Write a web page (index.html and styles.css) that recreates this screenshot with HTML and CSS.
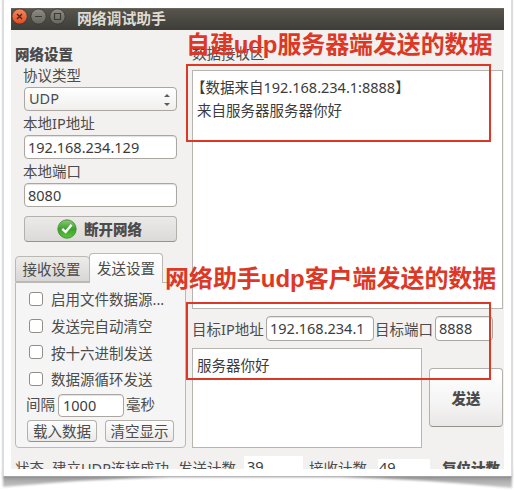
FILE: index.html
```html
<!DOCTYPE html>
<html lang="zh-CN">
<head>
<meta charset="utf-8">
<title>网络调试助手</title>
<link rel="stylesheet" href="styles.css">
</head>
<body>
<svg class="curl" width="515" height="490" viewBox="0 0 515 490">
  <defs>
    <filter id="soft" x="-5%" y="-50%" width="110%" height="200%"><feGaussianBlur stdDeviation="1"/></filter>
    <linearGradient id="fade" gradientUnits="userSpaceOnUse" x1="0" x2="0" y1="475" y2="488">
      <stop offset="0" stop-color="#7c7c7c"/><stop offset=".35" stop-color="#a8a8a8"/><stop offset="1" stop-color="#cacaca"/>
    </linearGradient>
  </defs>
  <path d="M3 470H512V488Q420 479 340 477H170Q90 479 3 487Z" fill="url(#fade)" filter="url(#soft)"/>
</svg>
<div class="sheet">
  <div class="window">
    <header class="titlebar">
      <svg width="56" height="18" viewBox="0 0 56 18" fill="none">
        <defs>
          <linearGradient id="close" x1="0" y1="0" x2="0" y2="1"><stop stop-color="#f58862"/><stop offset="1" stop-color="#df4b1e"/></linearGradient>
          <linearGradient id="ctl" x1="0" y1="0" x2="0" y2="1"><stop stop-color="#8d8b84"/><stop offset="1" stop-color="#67655f"/></linearGradient>
        </defs>
        <g transform="translate(0 -2)">
        <circle cx="8.6" cy="8.5" r="7.6" fill="url(#close)" stroke="#35332e" stroke-width=".7"/>
        <circle cx="27.5" cy="8.5" r="7.6" fill="url(#ctl)" stroke="#35332e" stroke-width=".7"/>
        <circle cx="46.5" cy="8.5" r="7.6" fill="url(#ctl)" stroke="#35332e" stroke-width=".7"/>
        <path d="M6 6l5 5M11 6l-5 5" stroke="#4a2518" stroke-width="1.3"/>
        <path d="M24 8.5h7M43.5 5.5h6v6h-6z" stroke="#3b3a36" stroke-width="1.2"/>
        </g>
      </svg>
      <h1 class="title">网络调试助手</h1>
    </header>
    <div class="main">
      <aside class="side">
        <h2 class="heading">网络设置</h2>
        <div class="settings">
          <div class="label">协议类型</div>
          <div class="field combo"><span>UDP</span><svg width="8" height="14" viewBox="0 0 8 14" fill="#5c5c5c"><path d="M1 6L4 3l3 3zM1 12h6l-3 3z"/></svg></div>
          <div class="label">本地IP地址</div>
          <div class="field">192.168.234.129</div>
          <div class="label">本地端口</div>
          <div class="field">8080</div>
          <div class="button connect">
            <svg width="20" height="20" viewBox="0 0 20 20" fill="none">
              <defs><linearGradient id="ok" x1="0" y1="0" x2="0" y2="1"><stop stop-color="#8dcb79"/><stop offset=".5" stop-color="#3f9f2d"/><stop offset="1" stop-color="#59c83c"/></linearGradient></defs>
              <circle cx="10" cy="10" r="9.2" fill="url(#ok)" stroke="#39852e" stroke-width=".8"/>
              <path d="M5.3 9.8l3.3 3.2 6-7.2" stroke="#fff" stroke-width="2.4"/>
            </svg>
            <span>断开网络</span>
          </div>
        </div>
        <div class="tabs"><div class="tab">接收设置</div><div class="tab active">发送设置</div></div>
        <div class="panel">
          <div class="check"><i class="box"></i>启用文件数据源...</div>
          <div class="check"><i class="box"></i>发送完自动清空</div>
          <div class="check"><i class="box"></i>按十六进制发送</div>
          <div class="check"><i class="box"></i>数据源循环发送</div>
          <div class="interval"><span>间隔</span><div class="field">1000</div><span>毫秒</span></div>
          <div class="actions"><div class="button load">载入数据</div><div class="button clear">清空显示</div></div>
        </div>
      </aside>
      <section class="content">
        <div class="receive-label">数据接收区</div>
        <div class="text received"><p class="source">【数据来自192.168.234.1:8888】</p><p>来自服务器服务器你好</p></div>
        <div class="target"><span class="ip-label">目标IP地址</span><div class="field ip">192.168.234.1</div><span class="port-label">目标端口</span><div class="field port">8888</div></div>
        <div class="compose"><div class="text message">服务器你好</div><div class="button send">发送</div></div>
      </section>
    </div>
    <footer class="status">
      <span class="state">状态</span><span class="connection">建立UDP连接成功</span><span class="sent">发送计数</span><span class="count">39</span><span class="got">接收计数</span><span class="count second">49</span><b>复位计数</b>
    </footer>
  </div>
</div>
<div class="frame frame-top"></div>
<div class="frame frame-bottom"></div>
<div class="note note-top">自建udp服务器端发送的数据</div>
<div class="note note-bottom">网络助手udp客户端发送的数据</div>
</body>
</html>
```

FILE: styles.css
```css
* { box-sizing: border-box; }
body {
  margin: 0; width: 515px; height: 490px; overflow: hidden; position: relative; background: #fff;
  font: 14.5px/20px "Noto Sans", "Noto Sans CJK SC", sans-serif; color: #4c4c4c; white-space: nowrap;
}
h1, h2, p { margin: 0; }
svg { display: block; flex: none; overflow: visible; }
.curl { position: absolute; left: 0; top: 0; }
.sheet { position: relative; width: 507px; height: 476px; margin-left: 4px; padding: 8px 7px 7px; background: #fff; box-shadow: -2px 0 1px #ddd, 2px 0 1px #ddd; }
.window { width: 493px; height: 461px; overflow: hidden; background: #f2f1f0; }
.titlebar { height: 22px; display: flex; align-items: flex-start; padding-top: 1px; background: linear-gradient(#57544c, #3e3d38); border-top: 1px solid #69665e; }
.title { margin-left: 10px; font-size: 14.8px; line-height: 16px; font-weight: 700; color: #dfdbd2; }
.main { display: flex; height: 418px; padding-left: 4px; }
.side { width: 171px; flex: none; padding-top: 14px; }
.heading { font-size: 14.5px; line-height: 20px; font-weight: 900; }
.settings { padding: 1px 9px 0; height: 189px; }
.label { height: 20px; margin: 0 0 2px -1px; }
.field { height: 24px; border: 1px solid #aaa6a1; border-radius: 4px; background: #fff; padding: 0 3px; line-height: 22px; color: #3c3c3c; box-shadow: inset 0 1px 1px #e4e2e0; }
.settings .field { margin-bottom: 2px; }
.combo { display: flex; justify-content: space-between; align-items: center; padding: 0 5px 2px 4px; color: #4c4c4c; background: linear-gradient(#fff, #f0efee); box-shadow: none; }
.button { display: flex; align-items: center; justify-content: center; border: 1px solid #b4b0ac; border-bottom-color: #96928e; border-radius: 4px; background: linear-gradient(#fdfdfd, #ebeae9); }
.button.connect { height: 26px; margin-top: 9px; padding-right: 2px; gap: 7px; font-weight: 900; background: linear-gradient(#ebeae9, #dcdad8); }
.tabs { display: flex; height: 29px; align-items: flex-end; }
.tab { width: 75px; height: 26px; padding-right: 2px; border: 1px solid #bcb8b4; border-radius: 4px 4px 0 0; background: linear-gradient(#ececeb, #d9d7d5); text-align: center; line-height: 24px; }
.tab.active { height: 30px; width: 74px; padding: 0; margin: 0 0 -1px -1px; background: linear-gradient(#fff, #f5f5f5); border-bottom: 0; line-height: 29px; position: relative; }
.panel { height: 166px; padding: 3px 10px 0; border: 1px solid #bcb8b4; border-radius: 0 0 4px 4px; background: #f5f5f5; }
.check { height: 26.7px; display: flex; align-items: center; padding-left: 3px; }
.box { width: 14px; height: 14px; margin: -1px 8px 0 0; border: 1px solid #918d89; border-radius: 3px; background: #fff; }
.interval { display: flex; height: 22px; gap: 2px; line-height: 21px; margin-top: 1px; }
.interval .field { width: 66px; height: 23px; margin-left: 1px; padding-left: 4px; line-height: 21px; }
.actions { display: flex; padding-left: 1px; gap: 8px; margin-top: 4px; }
.load, .clear { width: 70px; height: 22px; }
.clear { width: 69px; }
.content { width: 311px; margin-left: 6px; padding-top: 13px; }
.receive-label { height: 27px; }
.text { border: 1px solid #b8b4b0; background: #fff; color: #3c3c3c; }
.received { height: 239px; padding: 5px 4px; line-height: 23px; }
.source { text-indent: -6px; }
.target { display: flex; align-items: center; height: 25px; margin-top: 7px; }
.ip-label { width: 74px; }
.ip { width: 108px; height: 25px; margin-right: 1px; line-height: 22px; }
.port-label { width: 60px; }
.port { width: 58px; height: 25px; line-height: 22px; }
.compose { display: flex; margin-top: 7px; }
.message { width: 230px; height: 100px; padding: 6px 4px; }
.send { width: 74px; height: 59px; margin: 20px 0 0 7px; font-weight: 900; background: linear-gradient(#fff, #f5f4f4 60%, #e9e8e7); }
.status { display: flex; height: 21px; padding-left: 4px; }
.status span, .status b { line-height: 20px; margin-top: 10px; flex: none; }
.status .state { width: 37px; }
.status .connection { width: 126px; }
.status .sent { width: 66px; }
.status .count { width: 59px; margin-top: 8px; padding: 0 3px; background: #fff; color: #3c3c3c; }
.status .got { width: 69px; margin-left: 6px; }
.status .second { width: 52px; padding: 0 0 0 1px; margin-top: 11px; line-height: 17px; height: 20px; }
.status b { margin-left: 12px; font-weight: 900; }
.frame { position: absolute; left: 186px; width: 305px; height: 78px; border: 2px solid #dd3826; }
.frame-top { top: 64px; }
.frame-bottom { top: 302px; }
.note { position: absolute; font: 700 24px/30px "Liberation Sans", "Noto Sans CJK SC", sans-serif; color: #dd3826; }
.note-top { left: 186px; top: 30px; letter-spacing: -.12px; }
.note-bottom { left: 165px; top: 264px; letter-spacing: -.05px; }
```
